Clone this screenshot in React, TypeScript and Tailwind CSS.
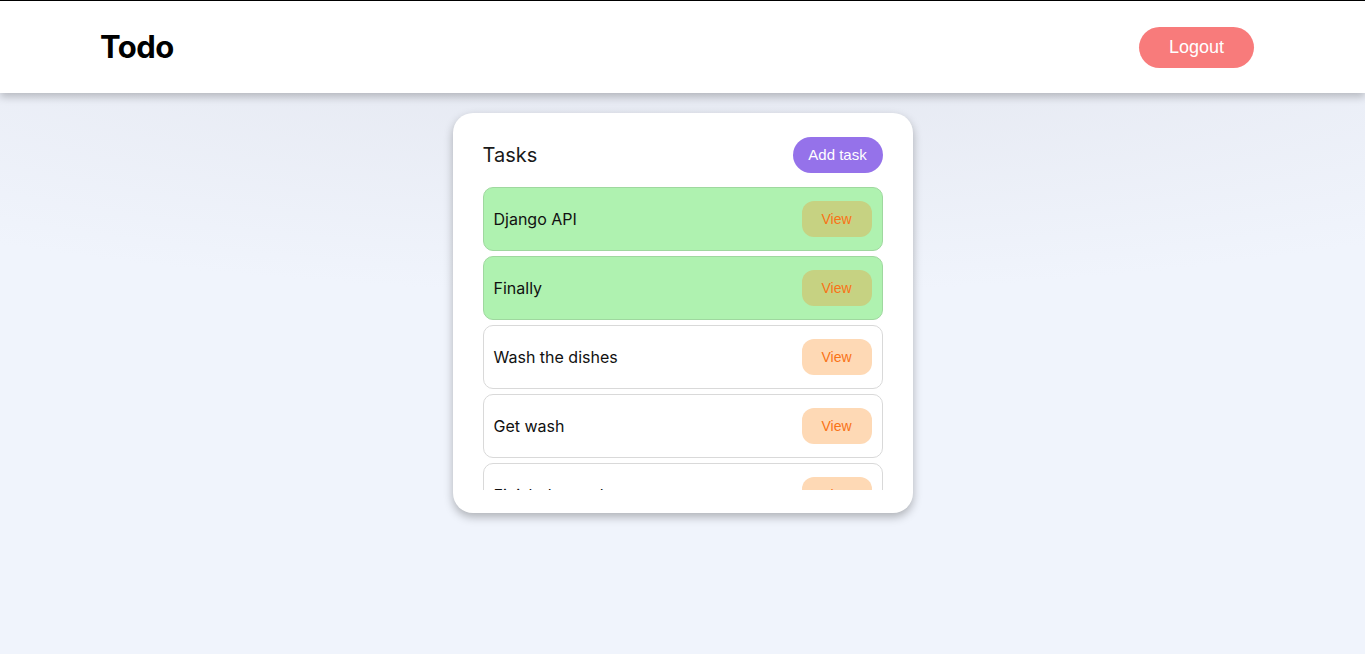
import React from 'react';

interface Task {
    title: string;
    done: boolean;
}

const tasks: Task[] = [
    { title: 'Django API', done: true },
    { title: 'Finally', done: true },
    { title: 'Wash the dishes', done: false },
    { title: 'Get wash', done: false },
    { title: 'Finish the work', done: false },
];

function TaskRow({ task }: { task: Task }) {
    return (
        <div
            className={
                task.done
                    ? 'flex items-center justify-between h-[64px] shrink-0 px-[10px] rounded-[10px] border border-[#9fd89f] bg-[#aff2b0]'
                    : 'flex items-center justify-between h-[64px] shrink-0 px-[10px] rounded-[10px] border border-[#d9d9d9] bg-white'
            }
        >
            <span className="text-[16px] text-[#111]">{task.title}</span>
            <button
                className={
                    task.done
                        ? "w-[70px] h-[36px] rounded-[12px] bg-[#c6d282] text-[#f97316] text-[14px] font-['Liberation_Sans',Arial,sans-serif]"
                        : "w-[70px] h-[36px] rounded-[12px] bg-[#fed9b5] text-[#f97316] text-[14px] font-['Liberation_Sans',Arial,sans-serif]"
                }
            >
                View
            </button>
        </div>
    );
}

export default function App() {
    return (
        <div className="min-h-[654px] font-['Inter',sans-serif] bg-[radial-gradient(ellipse_90%_45%_at_50%_0%,#e2e5ee_0%,#f0f4fc_100%)]">
            {/* Header */}
            <header className="relative z-10 h-[93px] border-t border-black bg-white shadow-[0_4px_8px_rgba(0,0,0,0.22)] flex items-center justify-between pl-[100px] pr-[111px]">
                <h1 className="text-[31px] font-bold text-black tracking-[-0.5px]">Todo</h1>
                <button className="w-[115px] h-[41px] rounded-full bg-[#f87b7b] text-white text-[18px] font-['Liberation_Sans',Arial,sans-serif]">
                    Logout
                </button>
            </header>

            {/* Card */}
            <div className="flex justify-center pt-[20px]">
                <div className="w-[460px] h-[400px] bg-white rounded-[20px] shadow-[0_4px_10px_rgba(0,0,0,0.28)] px-[30px] pt-[24px] pb-[23px] flex flex-col">
                    <div className="flex items-center justify-between h-[36px]">
                        <h2 className="text-[20px] text-[#1a1a1a]">Tasks</h2>
                        <button className="w-[90px] h-[36px] rounded-full bg-[#9572ea] text-white text-[15px] font-['Liberation_Sans',Arial,sans-serif]">
                            Add task
                        </button>
                    </div>
                    <div className="mt-[14px] flex flex-col gap-[5px] h-[303px] overflow-hidden">
                        {tasks.map((t) => (
                            <TaskRow key={t.title} task={t} />
                        ))}
                    </div>
                </div>
            </div>
        </div>
    );
}
